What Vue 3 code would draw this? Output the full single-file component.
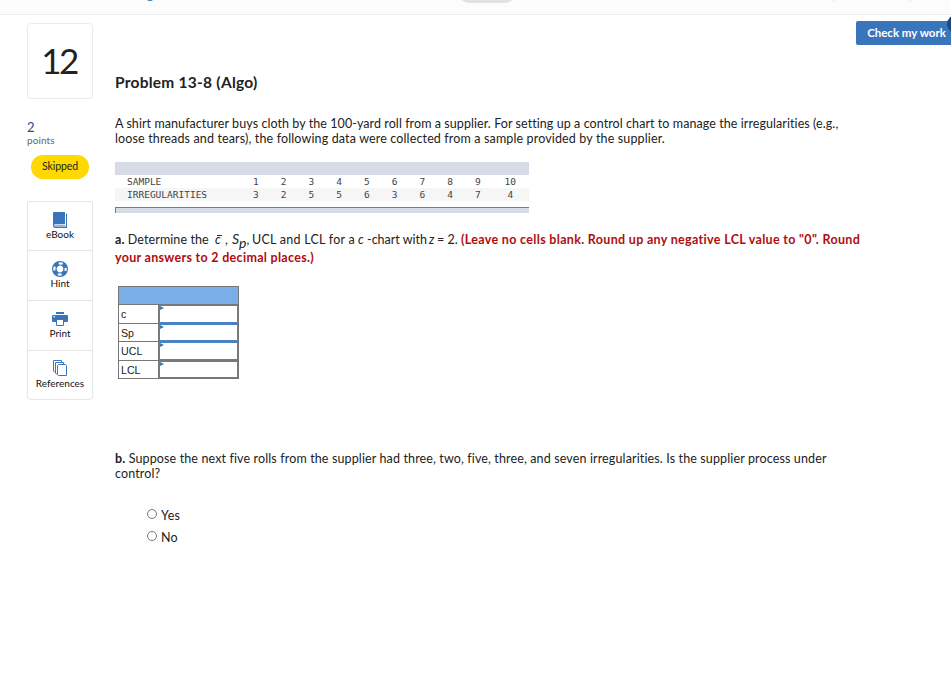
<script setup>
import { ref } from 'vue'

const samples = [1, 2, 3, 4, 5, 6, 7, 8, 9, 10]
const irregularities = [3, 2, 5, 5, 6, 3, 6, 4, 7, 4]

// answer cells of part a
const answers = ref([
  { label: 'c', value: '' },
  { label: 'Sp', value: '' },
  { label: 'UCL', value: '' },
  { label: 'LCL', value: '' }
])

const choice = ref('')
</script>

<template>
  <div class="page">
    <header class="topbar">
      <span class="top-dot"></span>
      <span class="top-pill"></span>
      <span class="top-tick first"></span>
      <span class="top-tick second"></span>
    </header>

    <div class="body">
      <aside class="sidebar">
        <div class="question-number">12</div>
        <div class="points">
          <span class="points-value">2</span>
          <span class="points-label">points</span>
        </div>
        <div class="badge">Skipped</div>

        <nav class="tools">
          <a class="tool">
            <svg width="16" height="16" viewBox="0 0 16 16">
              <path d="M2 0H13V12H3.2Q2.2 12.2 2.2 13.3Q2.3 14.3 3.2 14.4H14V1.5H15V16H3Q1 15.8 1 13.5V1Q1 0 2 0Z" fill="#3975ba" />
              <path d="M3 13.2H13" stroke="#3975ba" stroke-width=".8" />
            </svg>
            <span>eBook</span>
          </a>
          <a class="tool">
            <svg width="16" height="16" viewBox="0 0 16 16" fill="none" stroke="#3975ba">
              <circle cx="8" cy="8" r="7.4" stroke-width="1.2" />
              <circle cx="8" cy="8" r="4" stroke-width="1.2" />
              <circle cx="8" cy="8" r="5.6" stroke-width="4" stroke-dasharray="4.8 3.996" stroke-dashoffset="-2" />
            </svg>
            <span>Hint</span>
          </a>
          <a class="tool">
            <svg width="16" height="16" viewBox="0 0 16 16">
              <path d="M4 1H12V3H4Z M1 4H15Q16 4 16 5V10Q16 11 15 11H13V8H3V11H1Q0 11 0 10V5Q0 4 1 4Z" fill="#3975ba" />
              <path d="M3 7H13V11H3Z" fill="#3975ba" />
              <rect x="1.5" y="5" width="1.5" height="1.2" fill="#fff" />
              <path d="M4.5 8.5H11.5V14.5H4.5Z" fill="#fff" stroke="#3975ba" />
            </svg>
            <span>Print</span>
          </a>
          <a class="tool">
            <svg width="16" height="16" viewBox="0 0 16 16" fill="#fff" stroke="#3975ba">
              <path d="M1.5 .5H9.5V12.5H3L1.5 11V.5Z" />
              <path d="M3.5 2.5H11.5V14.5H5L3.5 13V2.5Z" />
              <path d="M6.5 4.5H13.5L14.5 5.5V15.5H6.5L5.5 14.5V5.5Z" />
            </svg>
            <span>References</span>
          </a>
        </nav>
      </aside>

      <main class="content">
        <h1 class="title">Problem 13-8 (Algo)</h1>

        <p class="text intro">
          <span class="line l1">A shirt manufacturer buys cloth by the 100-yard roll from a supplier. For setting up a control chart to manage the irregularities (e.g.,</span>
          <span class="line l2">loose threads and tears), the following data were collected from a sample provided by the supplier.</span>
        </p>

        <div class="data-table">
          <div class="data-head"></div>
          <div class="data-row">
            <span class="data-label">SAMPLE</span>
            <span v-for="n in samples" :key="n">{{ n }}</span>
          </div>
          <div class="data-row shaded">
            <span class="data-label">IRREGULARITIES</span>
            <span v-for="(n, i) in irregularities" :key="i">{{ n }}</span>
          </div>
          <div class="data-foot"></div>
        </div>

        <p class="text part-a">
          <span class="line a1">
            <span class="lead"><b>a.</b> Determine the</span>
            <span class="cbar"><i>c</i></span>
            <span class="comma">,</span>
            <span class="sp"><i>S</i><i class="sub">p</i>,</span>
            <span class="limits">UCL and LCL for a</span>
            <i class="c">c</i>
            <span class="chart">-chart with</span>
            <i class="z">z</i>
            <span class="eq">= 2.</span>
            <b class="note n1">(Leave no cells blank. Round up any negative LCL value to "0". Round</b>
          </span>
          <b class="line note n2">your answers to 2 decimal places.)</b>
        </p>

        <div class="answers">
          <div class="answers-head"></div>
          <template v-for="a in answers" :key="a.label">
            <label class="answer-label">{{ a.label }}</label>
            <div class="answer-cell">
              <input v-model="a.value" type="text" />
            </div>
          </template>
        </div>

        <p class="text part-b">
          <span class="line b1"><b>b.</b> Suppose the next five rolls from the supplier had three, two, five, three, and seven irregularities. Is the supplier process under</span>
          <span class="line b2">control?</span>
        </p>

        <div class="choices">
          <label v-for="c in ['Yes', 'No']" :key="c" class="choice">
            <input v-model="choice" type="radio" name="control" :value="c" />
            <span>{{ c }}</span>
          </label>
        </div>
      </main>

      <button class="check-btn">Check my work</button>
      <span class="corner"></span>
    </div>
  </div>
</template>

<style>
body {
  background: #fff;
  overflow: hidden;
}
</style>

<style scoped>
.page {
  width: 951px;
  height: 679px;
  overflow: hidden;
  background: #fff;
  color: #222;
  font-family: Lato, 'Open Sans', sans-serif;
}

.topbar {
  position: relative;
  height: 14px;
  background: #fcfcfc;
  border-bottom: 1px solid #ececec;
  overflow: hidden;
}

.top-dot {
  position: absolute;
  left: 145px;
  top: -9px;
  width: 10px;
  height: 10px;
  border-radius: 50%;
  background: #3975ba;
}

.top-pill {
  position: absolute;
  left: 459px;
  top: -17px;
  width: 56px;
  height: 20px;
  border-radius: 10px;
  background: #e3e1e4;
}

.top-tick {
  position: absolute;
  top: 0;
  width: 1px;
  height: 2px;
  background: #e4e4e4;
}

.top-tick.first {
  left: 833px;
}

.top-tick.second {
  left: 910px;
}

.body {
  position: relative;
  display: flex;
  align-items: flex-start;
}

/* left column */
.sidebar {
  width: 66px;
  margin: 8px 22px 0 27px;
  flex: none;
}

.question-number {
  box-sizing: border-box;
  height: 76px;
  padding-right: 2px;
  border: 1px solid #ebebeb;
  border-radius: 4px;
  font-family: Lato, sans-serif;
  font-size: 35px;
  line-height: 72px;
  letter-spacing: -2.5px;
  text-align: center;
}

.points {
  display: flex;
  flex-direction: column;
  margin-top: 21px;
}

.points-value {
  font-size: 13px;
  line-height: 14px;
  color: #1d4f91;
}

.points-label {
  font-size: 10px;
  line-height: 13px;
  letter-spacing: 0.1px;
  color: #666;
}

.badge {
  width: 58px;
  height: 24px;
  margin: 8px 0 0 4px;
  border-radius: 12px;
  background: #ffd900;
  font-size: 10.5px;
  line-height: 23px;
  letter-spacing: -0.1px;
  text-align: center;
}

.tools {
  margin-top: 22px;
  border: 1px solid #e6e6e6;
  border-radius: 0 0 4px 4px;
}

.tool {
  box-sizing: border-box;
  height: 50px;
  padding-top: 10px;
  display: flex;
  flex-direction: column;
  align-items: center;
  border-bottom: 1px solid #e6e6e6;
  font-size: 10px;
  line-height: 12px;
  color: #111;
  cursor: pointer;
}

.tool:first-child {
  height: 49px;
}

.tool:last-child {
  height: 48px;
  padding-top: 9px;
  border-bottom: none;
  line-height: 14px;
}

.tool svg {
  flex: none;
}

/* question */
.content {
  width: 760px;
  flex: none;
}

.title {
  margin: 57px 0 0;
  font-size: 15.5px;
  line-height: 20px;
  letter-spacing: 0.25px;
  font-weight: 700;
}

.text {
  margin: 0;
  font-size: 12.5px;
  line-height: 15px;
}

.line {
  display: block;
  white-space: nowrap;
}

.l1 {
  letter-spacing: 0.07px;
}

.l2 {
  letter-spacing: 0.14px;
}

.b1,
.b2 {
  letter-spacing: 0.13px;
}

.intro {
  margin-top: 24px;
}

.data-table {
  width: 414px;
  margin-top: 16px;
}

.data-head {
  height: 13px;
  background: #d7dbe6;
}

.data-row {
  display: grid;
  grid-template-columns: 127px repeat(9, 27.75px) 37px;
  height: 13px;
  font-family: 'DejaVu Sans Mono', monospace;
  font-size: 9.5px;
  line-height: 13px;
  text-align: center;
  color: #444;
}

.data-label {
  padding-left: 12px;
  text-align: left;
}

.shaded {
  background: #f6f6f6;
}

.data-foot {
  box-sizing: border-box;
  height: 6px;
  margin-top: 6px;
  border-top: 1px solid #777b85;
  border-left: 1px solid #777b85;
  background: #d7dbe6;
}

.part-a {
  margin-top: 18px;
  line-height: 18px;
}

.a1 {
  display: flex;
  height: 18px;
}

.lead {
  width: 100px;
  letter-spacing: 0.1px;
}

.cbar {
  position: relative;
  width: 10px;
}

.cbar::before {
  content: '';
  position: absolute;
  left: 2px;
  top: 4px;
  width: 5px;
  height: 1px;
  background: #333;
}

.comma {
  width: 7px;
}

.sp {
  width: 20px;
}

.sp i {
  font-size: 14px;
  line-height: 14px;
}

.sp .sub {
  position: relative;
  top: 4px;
}

.limits {
  width: 106px;
  letter-spacing: 0.25px;
}

.c {
  width: 9px;
}

.chart {
  width: 62px;
}

.z {
  width: 8px;
}

.eq {
  width: 24px;
}

.note {
  color: #b00c10;
}

.n1 {
  letter-spacing: 0.32px;
}

.n2 {
  letter-spacing: 0.3px;
}

.answers {
  display: grid;
  grid-template-columns: 39px 79px;
  grid-template-rows: 17px 18px 17px 18px 17px;
  gap: 1px;
  width: 119px;
  margin: 19px 0 0 3px;
  border: 1px solid #777;
  background: #777;
}

.answers-head {
  grid-column: 1 / 3;
  background: #7aaee6;
}

.answer-label {
  padding-left: 2px;
  background: #fff;
  font-family: 'Liberation Sans', Arial, sans-serif;
  font-size: 10.67px;
  line-height: 18px;
  overflow: hidden;
}

.answer-cell {
  position: relative;
  box-sizing: border-box;
  border: 1px solid #4a84c4;
  background: #fff;
}

.answer-cell::before {
  content: '';
  position: absolute;
  left: 0;
  top: 0;
  border-left: 4px solid #3975ba;
  border-top: 2.5px solid transparent;
  border-bottom: 2.5px solid transparent;
}

.answer-cell input {
  display: block;
  box-sizing: border-box;
  width: 100%;
  height: 100%;
  padding: 0 5px;
  border: none;
  outline: none;
  background: transparent;
}

.part-b {
  margin-top: 72px;
}

.choices {
  margin: 24px 0 0 32px;
}

.choice {
  display: flex;
  height: 22px;
  font-size: 12.5px;
  line-height: 22px;
  letter-spacing: 0.2px;
}

.choice input {
  appearance: none;
  box-sizing: border-box;
  width: 10px;
  height: 10px;
  margin: 4px 4px 0 0;
  border: 1px solid #767676;
  border-radius: 50%;
}

.choice input:checked {
  background: radial-gradient(#3975ba 45%, #fff 50%);
}

.check-btn {
  position: absolute;
  left: 856px;
  top: 6px;
  width: 101px;
  height: 24px;
  padding: 0 0 1px;
  border: none;
  border-radius: 2px;
  background: #3975ba;
  color: #fff;
  font-family: Lato, sans-serif;
  font-size: 11.5px;
  font-weight: 700;
  line-height: 21px;
}

.corner {
  position: absolute;
  left: 947px;
  top: 0;
  width: 18px;
  height: 18px;
  border-radius: 50%;
  background: #174a86;
}
</style>
